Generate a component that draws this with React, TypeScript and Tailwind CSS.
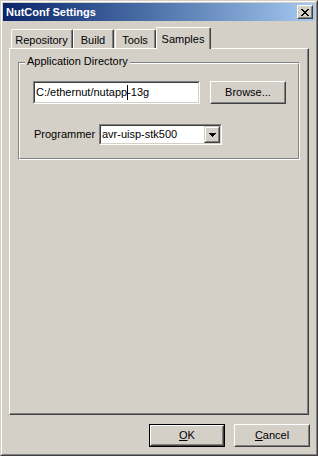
import React from 'react';

const font = "font-['Liberation_Sans',Arial,sans-serif] text-[11px] text-black";

// pixel rows of the little close "X" glyph
const closeGlyph = ['11000011', '01100110', '00111100', '00011000', '00111100', '01100110', '11000011'];

function Raised({ className = '', children }: { className?: string; children?: React.ReactNode }) {
  return (
    <div className={`border border-t-white border-l-white border-r-[#404040] border-b-[#404040] bg-[#d4d0c8] ${className}`}>
      <div className="h-full w-full border border-transparent border-r-[#808080] border-b-[#808080] flex items-center justify-center">
        {children}
      </div>
    </div>
  );
}

function Sunken({ className = '', children }: { className?: string; children?: React.ReactNode }) {
  return (
    <div className={`border border-t-[#808080] border-l-[#808080] border-r-white border-b-white ${className}`}>
      <div className="h-full w-full border border-t-[#404040] border-l-[#404040] border-r-[#d4d0c8] border-b-[#d4d0c8] bg-white flex items-center">
        {children}
      </div>
    </div>
  );
}

function Tab({ label, width, selected, className = '' }: { label: string; width: string; selected?: boolean; className?: string }) {
  return (
    <div
      className={`${width} ${selected ? 'h-[22px] -mb-px relative z-10' : 'h-[19px]'} border-t border-l border-r border-t-white border-l-white border-r-[#404040] rounded-tl-[2px] rounded-tr-[2px] bg-[#d4d0c8] ${className}`}
    >
      <div className={`h-full border-r border-r-[#808080] flex justify-center ${selected ? 'items-start pt-[3px]' : 'items-center pt-[2px]'}`}>
        {label}
      </div>
    </div>
  );
}

export default function App() {
  return (
    <div className={`w-[318px] h-[456px] bg-[#d4d0c8] border border-t-[#d4d0c8] border-l-[#d4d0c8] border-r-[#404040] border-b-[#404040] ${font}`}>
      <div className="h-full border border-t-white border-l-white border-r-[#808080] border-b-[#808080] p-px flex flex-col">
        {/* title bar */}
        <div className="h-[18px] flex items-center justify-between pl-[3px] pr-[2px] bg-gradient-to-r from-[#0a246a] to-[#a6caf0]">
          <span className="text-white font-bold text-[11px] leading-none">NutConf Settings</span>
          <Raised className="w-[16px] h-[14px]">
            <svg width="8" height="7" viewBox="0 0 8 7" shapeRendering="crispEdges">
              {closeGlyph.map((row, y) =>
                row.split('').map((c, x) => (c === '1' ? <rect key={`${x}-${y}`} x={x} y={y} width="1" height="1" fill="#000" /> : null))
              )}
            </svg>
          </Raised>
        </div>

        <div className="flex-1 flex flex-col px-[6px] pt-[6px]">
          {/* tab strip */}
          <div className="h-[21px] flex items-end">
            <Tab label="Repository" width="w-[62px]" className="ml-[2px]" />
            <Tab label="Build" width="w-[41px]" />
            <Tab label="Tools" width="w-[41px]" className="ml-[1px]" />
            <Tab label="Samples" width="w-[55px]" selected />
          </div>

          {/* tab panel */}
          <div className="w-[300px] h-[367px] border border-t-white border-l-white border-r-[#404040] border-b-[#404040]">
            <div className="h-full border-r border-b border-r-[#808080] border-b-[#808080] pl-[8px] pt-[13px]">
              <div className="relative w-[282px] h-[98px] border border-t-[#808080] border-l-[#808080] border-r-white border-b-white">
                <div className="h-full border border-t-white border-l-white border-r-[#808080] border-b-[#808080] pl-[13px] pt-[17px]">
                  <div className="flex">
                    <Sunken className="w-[167px] h-[23px]">
                      <span className="pl-px whitespace-nowrap">
                        C:/ethernut/nutapp
                        <span className="inline-block align-middle w-px h-[15px] bg-black -mr-px relative top-[-1px]" />
                        -13g
                      </span>
                    </Sunken>
                    <Raised className="ml-[10px] w-[76px] h-[23px]">Browse...</Raised>
                  </div>
                  <div className="flex items-center mt-[20px]">
                    <span className="w-[66px] pl-px">Programmer</span>
                    <Sunken className="w-[123px] h-[21px]">
                      <span className="flex-1 pl-px whitespace-nowrap">avr-uisp-stk500</span>
                      <div className="w-[16px] h-full border border-t-[#d4d0c8] border-l-[#d4d0c8] border-r-[#404040] border-b-[#404040] bg-[#d4d0c8]">
                        <div className="h-full border border-t-white border-l-white border-r-[#808080] border-b-[#808080] flex items-center justify-center">
                          <svg width="7" height="4" viewBox="0 0 7 4" shapeRendering="crispEdges">
                            <path d="M0 0h7v1H0zM1 1h5v1H1zM2 2h3v1H2zM3 3h1v1H3z" fill="#000" />
                          </svg>
                        </div>
                      </div>
                    </Sunken>
                  </div>
                </div>
                <span className="absolute left-[6px] top-[-8px] px-[2px] bg-[#d4d0c8] leading-[13px]">Application Directory</span>
              </div>
            </div>
          </div>

          {/* dialog buttons */}
          <div className="flex justify-end gap-[9px] mt-[9px] -mr-px">
            <div className="w-[76px] h-[23px] border border-black">
              <Raised className="h-full w-full">
                <span>
                  <span className="underline underline-offset-1">O</span>K
                </span>
              </Raised>
            </div>
            <Raised className="w-[76px] h-[23px]">
              <span>
                <span className="underline underline-offset-1">C</span>ancel
              </span>
            </Raised>
          </div>
        </div>
      </div>
    </div>
  );
}
